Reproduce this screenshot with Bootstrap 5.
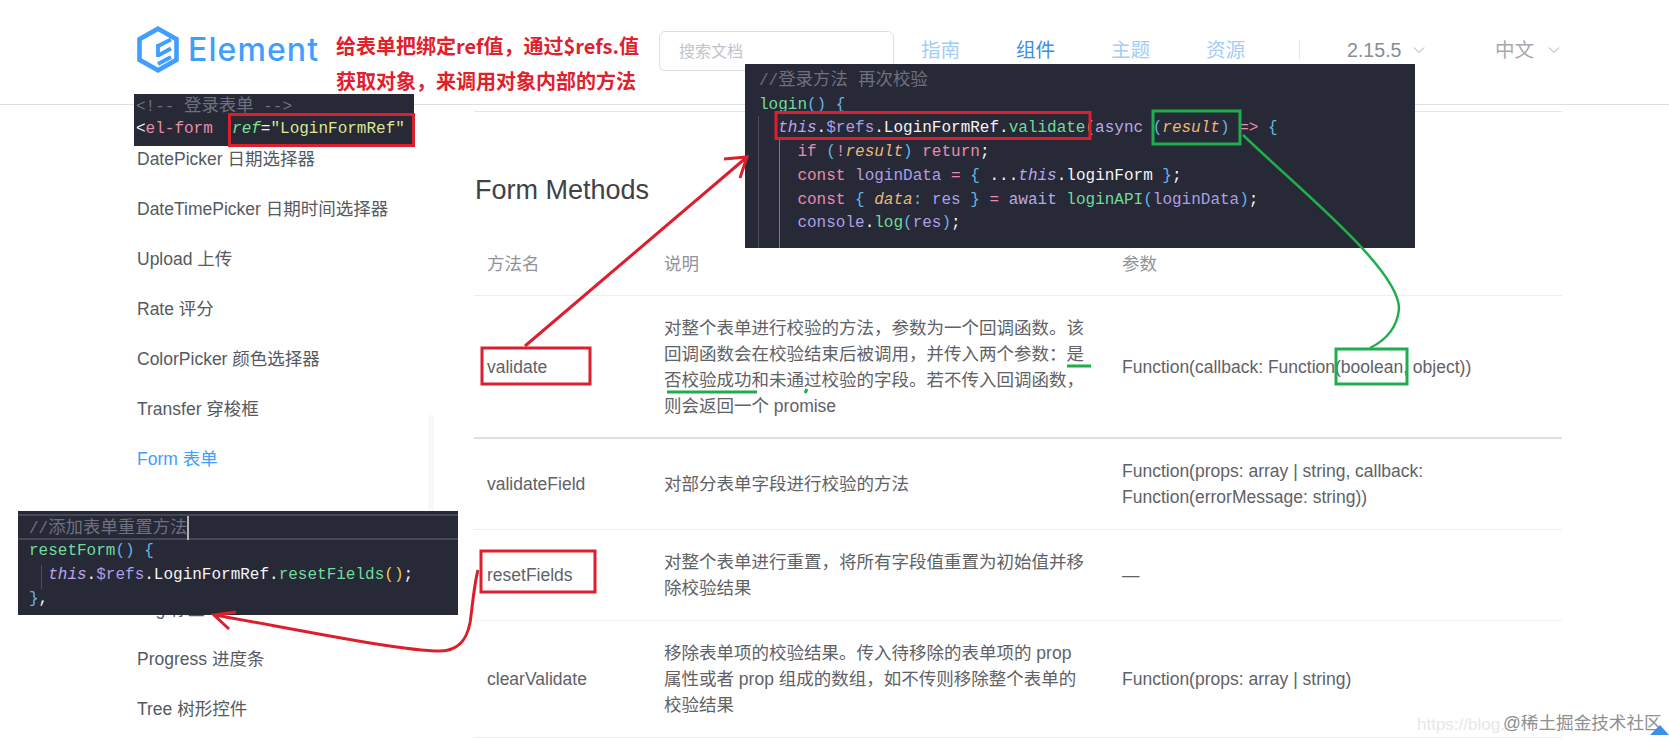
<!DOCTYPE html>
<html lang="zh-CN">
<head>
<meta charset="utf-8">
<title>Form Methods</title>
<link href="https://cdn.jsdelivr.net/npm/bootstrap@5.3.0/dist/css/bootstrap.min.css" rel="stylesheet">
<style>
html,body{height:740px;overflow:hidden}
body{position:relative;width:1669px;background:#fff;color:#606266;font-family:"Liberation Sans","Noto Sans CJK SC",sans-serif;font-size:17.5px}
.topbar{height:105px;padding:26px 107px 0 137px;border-bottom:1px solid #dcdfe6}
.brand-mark{width:181px;height:47px;color:#409eff}
.brand-word{font-family:Inter,sans-serif;font-weight:500;font-size:32px;letter-spacing:1.1px;line-height:47px;margin-left:9px}
.search-fake{position:absolute;left:659px;top:31px;width:235px;height:40px;border:1px solid #dcdfe6;border-radius:6px;padding:0 19px;line-height:40px;font-size:16px;color:#c0c4cc}
.nav-wrap{position:absolute;left:921px;top:31px;height:40px;width:640px;font-size:19.6px;line-height:38px}
.nav-wrap a{position:absolute;top:0;text-decoration:none;color:#a3cdf5}
.nav-wrap a.now{color:#3a8ee6}
.nav-wrap .ver{position:absolute;top:0;color:#888c94}
.nav-wrap .lang{position:absolute;top:0;color:#a6a9ad}
.nav-wrap .sep{position:absolute;left:378px;top:9px;width:1px;height:20px;background:#e6e9ef}
.chev{position:absolute;top:15px;width:12px;height:8px}
.layout{display:flex}
.side-col{width:474px;padding-left:137px;padding-top:28.5px;flex:none}
.side-col a{display:block;height:50px;line-height:50px;color:#555a62;text-decoration:none;white-space:nowrap}
.side-col a.cur{color:#409eff}
.side-gap{height:50px}
.content-col{width:1088px;flex:none;border-top:1px solid #e4e7ed;margin-top:6px}
.content-col h3{font-size:27px;font-weight:400;color:#3f4247;margin:58px 0 0 1px;line-height:40px;height:40px}
.m-table{width:1088px;table-layout:fixed;margin:22px 0 0;font-size:17.5px;line-height:26px;color:#606266;--bs-table-color:#606266;--bs-table-border-color:#ebeef5}
.m-table th{font-weight:400;color:#909399;padding:19px 13px 18px;height:63px}
.m-table td{padding:19px 13px 19px}
.m-table td.wrap-b{padding-right:20px}
.m-table tr.thick td{border-bottom:2px solid #dddfe3;padding-bottom:17.5px}
.c-a{width:177px}.c-b{width:458px}.c-c{width:453px}
.shot{position:absolute;margin:0;background:#272936;color:#eef;font-family:"Liberation Mono","Noto Sans CJK SC",monospace;font-size:16px;white-space:pre;overflow:hidden}
.shot-login{left:745px;top:64px;width:670px;height:184px;padding:5px 0 0 14px;line-height:23.7px}
.shot-form{left:134px;top:94px;width:280px;height:52px;padding:2px 0 0 2px;line-height:22px}
.shot-reset{left:18px;top:511px;width:440px;height:104px;padding:3px 0 0 11px;line-height:24px}
.hl-line{display:block;margin-left:-11px;padding-left:11px;border-top:2px solid #44465a;border-bottom:2px solid #44465a;height:26px;line-height:20px;margin-bottom:-1px}
.caret-bar{display:inline-block;width:2px;height:24px;background:#b0b2bb;vertical-align:-7px}
.k-c{color:#6d7080}.k-c .zh{font-size:17.4px}
.k-g{color:#6fdc9a}.k-p{color:#e88bb0}.k-s{color:#dfe593}.k-t{color:#b7a6ee;font-style:italic}
.k-b{color:#64b4e6}.k-o{color:#e9b877;font-style:italic}.k-y{color:#f3c94e}.k-v{color:#ab9fe6}.k-w{color:#f4f4f8}
.k-gi{color:#78e08f;font-style:italic}.k-l{color:#b8a8e8}
.guide{position:absolute;width:1px;background:#4b4d5c}
.g1{left:13px;top:52px;bottom:0}
.g2{left:34px;top:76px;bottom:0;background:#8e6f94}
.g3{left:23px;top:54px;height:24px}
.mark-layer{position:absolute;left:0;top:0;width:1669px;height:740px;pointer-events:none}
.note{position:absolute;left:336px;top:28px;width:320px;color:#e0202d;font-family:"Noto Sans CJK SC",sans-serif;font-weight:700;font-size:20px;line-height:35px;white-space:nowrap}
.bar-shade{position:absolute;left:428px;top:415px;width:6px;height:96px;background:#f8f8f9}
.wm-a{position:absolute;left:1417px;top:712px;color:#e6e8eb;font-size:17px;white-space:nowrap}
.wm-b{position:absolute;left:1503px;top:710px;color:#8d8f93;font-size:17.6px;white-space:nowrap;line-height:26px}
</style>
</head>
<body>
<header class="topbar d-flex align-items-start">
  <div class="brand-mark d-flex align-items-center">
    <svg class="flex-shrink-0" width="42" height="47" viewBox="0 0 42 47" fill="none">
      <path d="M21 2.7 L39.5 13.2 V33.8 L21 44.3 L2.5 33.8 V13.2 Z" stroke="#409eff" stroke-width="4.6"/>
      <path d="M21 20 L34 13.5 M21 29.5 L34 22.5 M21 38 L34 31 M21 18 V31" stroke="#409eff" stroke-width="3.8"/>
    </svg>
    <span class="brand-word">Element</span>
  </div>
</header>
<div class="search-fake">搜索文档</div>
<nav class="nav-wrap">
  <a href="#" style="left:0">指南</a>
  <a href="#" class="now" style="left:95px">组件</a>
  <a href="#" style="left:190px">主题</a>
  <a href="#" style="left:285px">资源</a>
  <span class="sep"></span>
  <span class="ver" style="left:426px">2.15.5</span>
  <svg class="chev" style="left:492px" viewBox="0 0 12 8" fill="none" stroke="#a6a9ad" stroke-width="1"><path d="M1 1.5 L6 6.5 L11 1.5"/></svg>
  <span class="lang" style="left:574px">中文</span>
  <svg class="chev" style="left:627px" viewBox="0 0 12 8" fill="none" stroke="#a6a9ad" stroke-width="1"><path d="M1 1.5 L6 6.5 L11 1.5"/></svg>
</nav>
<div class="layout">
  <aside class="side-col">
    <a href="#">DatePicker 日期选择器</a>
    <a href="#">DateTimePicker 日期时间选择器</a>
    <a href="#">Upload 上传</a>
    <a href="#">Rate 评分</a>
    <a href="#">ColorPicker 颜色选择器</a>
    <a href="#">Transfer 穿梭框</a>
    <a href="#" class="cur">Form 表单</a>
    <div class="side-gap"></div>
    <div class="side-gap"></div>
    <a href="#">Tag 标签</a>
    <a href="#">Progress 进度条</a>
    <a href="#">Tree 树形控件</a>
  </aside>
  <main class="content-col">
    <h3>Form Methods</h3>
    <table class="table m-table align-middle">
      <colgroup><col class="c-a"><col class="c-b"><col class="c-c"></colgroup>
      <thead><tr><th>方法名</th><th>说明</th><th>参数</th></tr></thead>
      <tbody>
        <tr class="thick"><td>validate</td><td class="wrap-b">对整个表单进行校验的方法，参数为一个回调函数。该回调函数会在校验结束后被调用，并传入两个参数：是否校验成功和未通过校验的字段。若不传入回调函数，则会返回一个 promise</td><td>Function(callback: Function(boolean, object))</td></tr>
        <tr><td>validateField</td><td class="wrap-b">对部分表单字段进行校验的方法</td><td>Function(props: array | string, callback: Function(errorMessage: string))</td></tr>
        <tr><td>resetFields</td><td class="wrap-b">对整个表单进行重置，将所有字段值重置为初始值并移除校验结果</td><td>—</td></tr>
        <tr><td>clearValidate</td><td class="wrap-b">移除表单项的校验结果。传入待移除的表单项的 prop 属性或者 prop 组成的数组，如不传则移除整个表单的校验结果</td><td>Function(props: array | string)</td></tr>
      </tbody>
    </table>
  </main>
</div>
<div class="bar-shade"></div>
<div class="wm-a">https://blog.</div>
<div class="wm-b">@稀土掘金技术社区</div>
<div class="note">给表单把绑定ref值，通过$refs.值<br>获取对象，来调用对象内部的方法</div>
<pre class="shot shot-form"><span class="k-c">&lt;!-- <span class="zh">登录表单</span> --&gt;</span>
<span class="k-w">&lt;</span><span class="k-p">el-form</span>  <span class="k-gi">ref</span><span class="k-w">=</span><span class="k-s">"LoginFormRef"</span></pre>
<pre class="shot shot-login"><span class="guide g1"></span><span class="guide g2"></span><span class="k-c">//<span class="zh">登录方法 再次校验</span></span>
<span class="k-g">login</span><span class="k-b">() {</span>
  <span class="k-t">this</span><span class="k-w">.</span><span class="k-v">$refs</span><span class="k-w">.LoginFormRef.</span><span class="k-g">validate</span><span class="k-y">(</span><span class="k-l">async</span> <span class="k-b">(</span><span class="k-o">result</span><span class="k-b">)</span> <span class="k-p">=&gt;</span> <span class="k-b">{</span>
    <span class="k-p">if</span> <span class="k-b">(</span><span class="k-p">!</span><span class="k-o">result</span><span class="k-b">)</span> <span class="k-p">return</span><span class="k-w">;</span>
    <span class="k-p">const</span> <span class="k-v">loginData</span> <span class="k-p">=</span> <span class="k-b">{</span> <span class="k-w">...</span><span class="k-t">this</span><span class="k-w">.loginForm</span> <span class="k-b">}</span><span class="k-w">;</span>
    <span class="k-p">const</span> <span class="k-b">{</span> <span class="k-o">data</span><span class="k-b">:</span> <span class="k-v">res</span> <span class="k-b">}</span> <span class="k-p">=</span> <span class="k-l">await</span> <span class="k-g">loginAPI</span><span class="k-b">(</span><span class="k-v">loginData</span><span class="k-b">)</span><span class="k-w">;</span>
    <span class="k-v">console</span><span class="k-w">.</span><span class="k-g">log</span><span class="k-b">(</span><span class="k-v">res</span><span class="k-b">)</span><span class="k-w">;</span></pre>
<pre class="shot shot-reset"><span class="guide g3"></span><span class="hl-line"><span class="k-c">//<span class="zh">添加表单重置方法</span></span><span class="caret-bar"></span></span><span class="k-g">resetForm</span><span class="k-b">() {</span>
  <span class="k-t">this</span><span class="k-w">.</span><span class="k-v">$refs</span><span class="k-w">.LoginFormRef.</span><span class="k-g">resetFields</span><span class="k-y">()</span><span class="k-w">;</span>
<span class="k-b">}</span><span class="k-w">,</span></pre>
<svg class="mark-layer" viewBox="0 0 1669 740" fill="none">
  <g stroke="#dc1f2e" stroke-width="3">
    <rect x="229.5" y="114.5" width="184" height="31"/>
    <rect x="776" y="112.5" width="314" height="26"/>
    <rect x="482" y="348" width="108" height="36"/>
    <rect x="481" y="551" width="114" height="41"/>
    <path d="M525 346 L747 157 M724 159 L747 157 L740 178"/>
    <path d="M478 570 C474 585 472 610 470 623 C467 638 460 651 440 651 C400 651 300 630 215 615 M229 629 L214 615 L236 612"/>
  </g>
  <g stroke="#1fae4e" stroke-width="3">
    <rect x="1153" y="111" width="87" height="33"/>
    <rect x="1336" y="349" width="71" height="35"/>
    <path stroke-width="2.5" d="M1243 135 C1300 190 1400 270 1399 309 C1397 330 1384 341 1370 348"/>
    <path d="M1067 366 H1091 M667 392 H757 M807 389 L805 393"/>
  </g>
  <path d="M1650 735 L1660 725 L1669 735 Z" fill="#3d8fe6"/>
</svg>
</body>
</html>
